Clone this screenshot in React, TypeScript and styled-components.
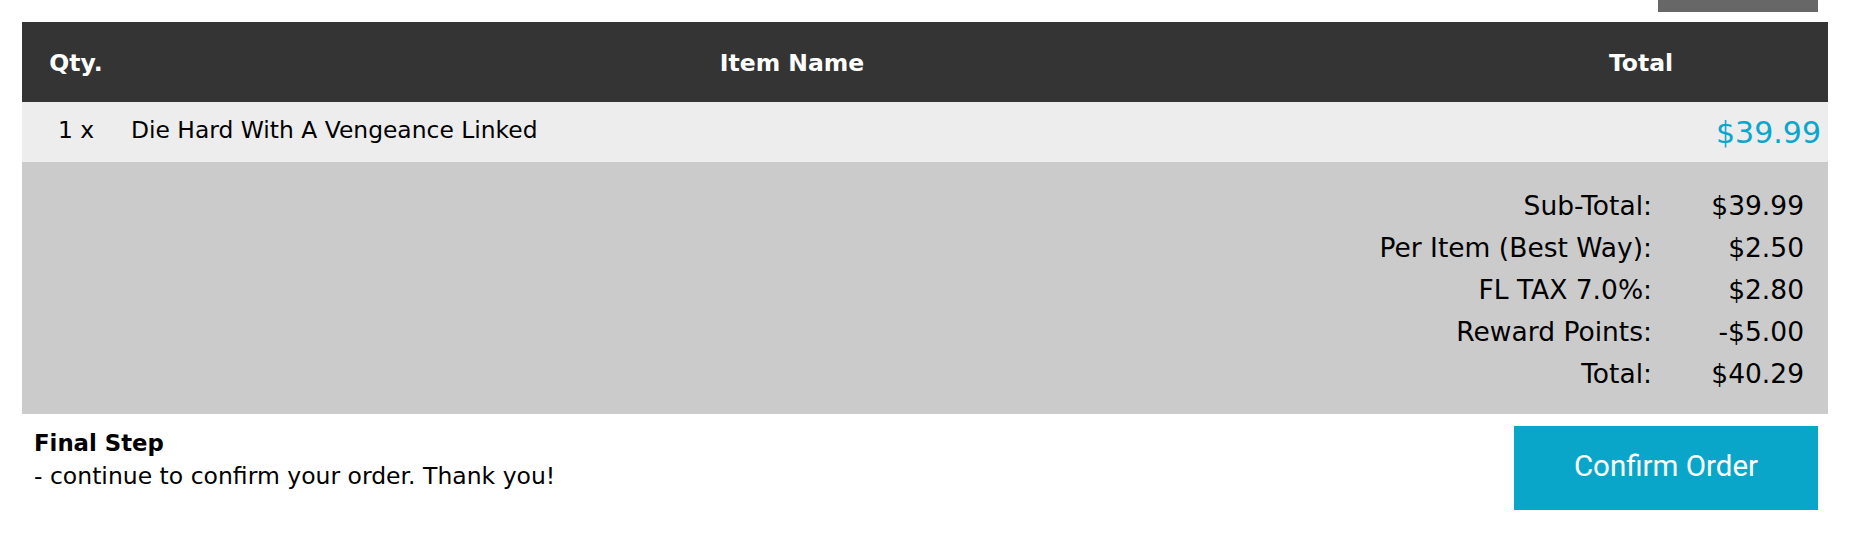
import React from 'react';
import styled, { createGlobalStyle } from 'styled-components';

const GlobalStyle = createGlobalStyle`
  body {
    margin: 0;
    background: #ffffff;
    font-family: "DejaVu Sans", Verdana, sans-serif;
    color: #000;
  }
`;

const Page = styled.div`
  padding: 0 26px 0 22px;
`;

const TopBar = styled.div`
  display: flex;
  justify-content: flex-end;
  padding-right: 10px;
  height: 22px;
`;

const TopButton = styled.div`
  width: 160px;
  height: 12px;
  background: #676767;
`;

const HeaderRow = styled.div`
  display: grid;
  grid-template-columns: 108px 1fr 374px;
  height: 80px;
  padding-top: 2px;
  box-sizing: border-box;
  align-items: center;
  background: #343434;
  color: #ffffff;
  font-weight: bold;
  font-size: 23.5px;
`;

const HeadCell = styled.div`
  text-align: center;
`;

const ItemRow = styled.div`
  display: grid;
  grid-template-columns: 108px 1fr 374px;
  height: 60px;
  align-items: center;
  background: #ededed;
  font-size: 23.4px;
`;

const QtyCell = styled.div`
  text-align: center;
  padding-bottom: 4px;
`;

const NameCell = styled.div`
  padding: 0 0 4px 1px;
`;

const PriceCell = styled.div`
  text-align: right;
  padding-right: 7px;
  font-size: 30px;
  color: #0aa6cc;
`;

const Summary = styled.div`
  display: grid;
  grid-template-columns: 1fr 152px;
  background: #cbcbcb;
  padding: 23px 24px 19px 0;
  font-size: 26.5px;
  line-height: 42px;
`;

const SumLabel = styled.div`
  text-align: right;
  padding-right: 0;
`;

const SumValue = styled.div`
  text-align: right;
`;

const Footer = styled.div`
  display: flex;
  justify-content: space-between;
  align-items: flex-start;
`;

const Note = styled.div`
  padding: 13px 0 0 12px;
  font-size: 23.5px;
  line-height: 33px;
`;

const NoteTitle = styled.div`
  font-weight: bold;
  font-size: 22.8px;
`;

const ConfirmButton = styled.button`
  margin: 12px 10px 0 0;
  width: 304px;
  height: 84px;
  padding: 0 0 4px;
  border: none;
  background: #09a6ca;
  color: #ffffff;
  font-family: Roboto, "Liberation Sans", sans-serif;
  font-size: 29.5px;
  cursor: pointer;
`;

const totals = [
  { label: 'Sub-Total:', value: '$39.99' },
  { label: 'Per Item (Best Way):', value: '$2.50' },
  { label: 'FL TAX 7.0%:', value: '$2.80' },
  { label: 'Reward Points:', value: '-$5.00' },
  { label: 'Total:', value: '$40.29' },
];

export default function App() {
  return (
    <>
      <GlobalStyle />
      <Page>
        <TopBar>
          <TopButton />
        </TopBar>
        <HeaderRow>
          <HeadCell>Qty.</HeadCell>
          <HeadCell>Item Name</HeadCell>
          <HeadCell>Total</HeadCell>
        </HeaderRow>
        <ItemRow>
          <QtyCell>1 x</QtyCell>
          <NameCell>Die Hard With A Vengeance Linked</NameCell>
          <PriceCell>$39.99</PriceCell>
        </ItemRow>
        <Summary>
          {totals.map((t) => (
            <React.Fragment key={t.label}>
              <SumLabel>{t.label}</SumLabel>
              <SumValue>{t.value}</SumValue>
            </React.Fragment>
          ))}
        </Summary>
        <Footer>
          <Note>
            <NoteTitle>Final Step</NoteTitle>
            - continue to confirm your order. Thank you!
          </Note>
          <ConfirmButton>Confirm Order</ConfirmButton>
        </Footer>
      </Page>
    </>
  );
}
